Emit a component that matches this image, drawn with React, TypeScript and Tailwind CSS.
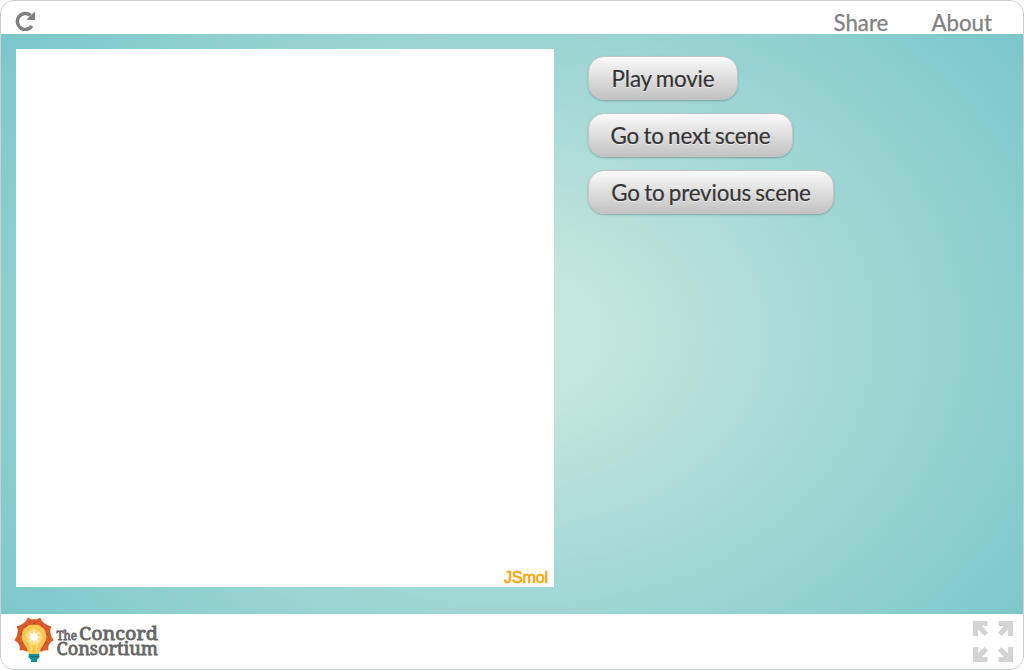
import React from "react";

const actions = [
  { label: "Play movie", width: "w-[150px]" },
  { label: "Go to next scene", width: "w-[205px]" },
  { label: "Go to previous scene", width: "w-[246px]" },
];

const petals = [-134, 134, -101, 101, -59, 59, -18, 18];
const shades = [-118, 118, -80, 80, -39, 39, 0];
const rays = [0, 45, 90, 135, 180, 225, 270, 315];

function ReloadIcon() {
  return (
    <svg className="block h-5 w-5" viewBox="0 0 20 20" aria-hidden="true">
      <path d="M16.9 15A8 8 0 1 1 15.6 4.4" fill="none" stroke="#808080" strokeWidth="3.5" />
      <path d="M20 0.6V9H11.6L14 6.2L17 3.2Z" fill="#808080" />
    </svg>
  );
}

function BulbLogo() {
  return (
    <svg className="block h-[46px] w-10 shrink-0" viewBox="0 0 40 46" aria-hidden="true">
      {petals.map((a) => (
        <path key={a} transform={`rotate(${a} 20 19.5)`} d="M20 -0.6Q22.2 2.6 25.8 3.6Q27.4 8 25.5 12L20 20L14.5 12Q12.6 8 14.2 3.6Q17.8 2.6 20 -0.6Z" fill="#d95b2a" />
      ))}
      {shades.map((a) => (
        <path key={a} transform={`rotate(${a} 20 19.5)`} d="M20 5.2Q22.4 7 23 11H17Q17.6 7 20 5.2Z" fill="#a93e20" />
      ))}
      <path d="M20 7.5C11.8 7.5 7.5 13.4 7.5 19.8C7.5 27 14 29 14.7 37H25.3C26 29 32.5 27 32.5 19.8C32.5 13.4 28.2 7.5 20 7.5Z" fill="#f9c650" />
      <circle cx="20" cy="20" r="8" fill="#fbdc83" />
      <path d="M17.3 24V36M22.7 24V36" stroke="#fbe09a" strokeWidth="1" />
      {rays.map((a) => (
        <path key={a} transform={`rotate(${a} 20 20)`} d="M18.2 20L20 13L21.8 20Z" fill="#fffef2" />
      ))}
      <circle cx="20" cy="20" r="3.6" fill="#fffef2" />
      <path d="M14.7 37H25.3V40.6L23 42.4V45H17V42.4L14.7 40.6Z" fill="#159096" />
      <path d="M14.8 39.7H25.2" stroke="#0b6571" strokeWidth="1" />
    </svg>
  );
}

function FullscreenIcon() {
  return (
    <svg className="block h-[41px] w-10" viewBox="0 0 40 41" fill="#d2d3d4" aria-hidden="true">
      <path d="M0 0H14.5V5H9L15 11.5L11.5 15L5 8.5V15H0Z" />
      <path d="M40 0H25.5V5H31L25 11.5L28.5 15L35 8.5V15H40Z" />
      <path d="M0 41H14.5V36H9L15 29.5L11.5 26L5 32.5V26H0Z" />
      <path d="M40 41H25.5V36H31L25 29.5L28.5 26L35 32.5V26H40Z" />
    </svg>
  );
}

export default function App() {
  return (
    <div className="h-[670px] w-[1024px] bg-white font-['Lato',sans-serif]">
      <div className="flex h-full flex-col overflow-hidden rounded-[14px] border border-[#ccd0d0] bg-white">
        <header className="flex h-[33px] shrink-0 items-start justify-between pr-[31px] pl-[14px]">
          <button className="mt-[10px]" aria-label="Reload"><ReloadIcon /></button>
          <nav className="flex gap-[43px] pt-[7px] text-[22.3px] leading-[30px] text-[#808080] [-webkit-text-stroke:0.25px_#808080]">
            <a>Share</a>
            <a>About</a>
          </nav>
        </header>
        <main className="flex h-[580px] shrink-0 bg-[radial-gradient(690px_520px_at_511px_301px,#c8e8de_0%,#c5e6dc_12%,#a8dad6_43%,#75c4ca_100%)] pt-[15px] pl-[15px]">
          <section className="flex h-[538px] w-[538px] items-end justify-end bg-white pr-[6px]">
            <span className="font-['Liberation_Sans',sans-serif] text-base leading-[18px] tracking-[-0.1px] text-[#ffa500] [-webkit-text-stroke:0.6px_#ffa500]">JSmol</span>
          </section>
          <section className="flex flex-col items-start gap-[13px] pt-[7px] pl-[34px]">
            {actions.map(({ label, width }) => (
              <button key={label} className={`${width} h-[44px] rounded-[16px] border border-[#c3c5c5] bg-linear-to-b from-[#fafafa] to-[#c2c2c2] pt-px text-[22.4px] tracking-[-0.18px] [word-spacing:-1.2px] whitespace-nowrap text-[#333] shadow-[0_1px_2px_rgba(0,0,0,0.25)] [-webkit-text-stroke:0.2px_#333] [text-shadow:0_1px_1px_rgba(255,255,255,0.7)]`}>
                {label}
              </button>
            ))}
          </section>
        </main>
        <footer className="flex flex-1 items-start justify-between pr-[10px] pl-[13px]">
          <div className="flex items-start pt-[3px]">
            <BulbLogo />
            <svg className="ml-[2px] block h-[46px] w-[104px]" viewBox="0 0 104 46" fill="#666" stroke="#666" strokeWidth="0.8" fontFamily="'Noto Serif','DejaVu Serif',serif" aria-label="The Concord Consortium">
              <text x="0.5" y="22.8" fontSize="12.5" textLength="20.5" lengthAdjust="spacingAndGlyphs">The</text>
              <text x="23" y="23.2" fontSize="18" textLength="79" lengthAdjust="spacingAndGlyphs">Concord</text>
              <text x="0.5" y="37.8" fontSize="18" textLength="101.5" lengthAdjust="spacingAndGlyphs">Consortium</text>
            </svg>
          </div>
          <button className="mt-[7px]" aria-label="Full screen"><FullscreenIcon /></button>
        </footer>
      </div>
    </div>
  );
}
